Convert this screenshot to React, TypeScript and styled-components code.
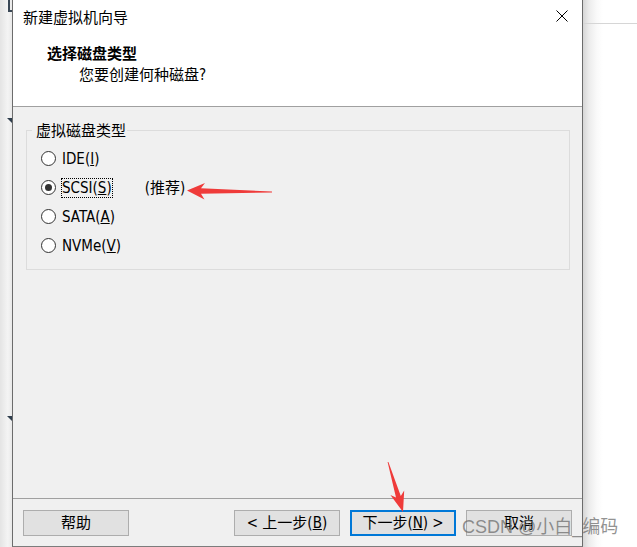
import React from "react";
import styled, { createGlobalStyle } from "styled-components";

const GlobalStyle = createGlobalStyle`
  html, body { margin: 0; padding: 0; background: #ffffff; }
  body { width: 637px; height: 547px; overflow: hidden; }
`;

const UI_FONT = `"DejaVu Sans Condensed", "DejaVu Sans", "Noto Sans CJK SC", sans-serif`;
const CJK_FONT = `"Noto Sans CJK SC", "DejaVu Sans", sans-serif`;

const Page = styled.div`
  position: relative;
  display: flex;
  width: 637px;
  height: 547px;
  overflow: hidden;
  font-family: ${UI_FONT};
  font-stretch: condensed;
  font-size: 15px;
  color: #000;
`;

const LeftStrip = styled.div`
  width: 12px;
  flex: none;
  display: flex;
  flex-direction: column;
  background: linear-gradient(to right, #e4e4e4, #f4f4f4 65%, #e9e9e9);
`;

const Bracket = styled.div`
  margin-left: 8px;
  width: 3px;
  height: 10px;
  border-left: 2px solid #3a4856;
  border-bottom: 2px solid #3a4856;
`;

const Caret = styled.div<{ $top: number }>`
  margin-top: ${(p) => p.$top}px;
  margin-left: 7px;
  width: 0;
  height: 0;
  border-top: 5px solid #2e3d4c;
  border-left: 5px solid transparent;
`;

const Window = styled.div`
  width: 571px;
  height: 547px;
  flex: none;
  box-sizing: border-box;
  border-left: 1px solid #6c6c6c;
  border-right: 1px solid #6c6c6c;
  border-bottom: 1px solid #7c7c7c;
  display: flex;
  flex-direction: column;
  background: #f0f0f0;
`;

const Header = styled.div`
  height: 106px;
  flex: none;
  background: #ffffff;
  border-bottom: 1px solid #a0a0a0;
`;

const TitleBar = styled.div`
  height: 32px;
  display: flex;
  align-items: center;
  justify-content: space-between;
  padding-left: 10px;
`;

const TitleText = styled.div`
  font-family: ${CJK_FONT};
  font-size: 15px;
  line-height: 20px;
  margin-top: 1px;
`;

const CloseButton = styled.div`
  width: 40px;
  height: 30px;
  display: flex;
  align-items: center;
  justify-content: center;
`;

const StepTitle = styled.div`
  margin: 11px 0 0 34px;
  font-family: ${CJK_FONT};
  font-weight: bold;
  font-size: 15px;
  line-height: 20px;
`;

const StepSubtitle = styled.div`
  margin: 2px 0 0 66px;
  font-size: 15px;
  line-height: 20px;
`;

const Body = styled.div`
  flex: 1;
  padding: 13px 12px 0 13px;
`;

const GroupBox = styled.fieldset`
  margin: 0;
  padding: 0;
  border: 1px solid #dcdcdc;
  min-width: 0;
`;

const GroupLabel = styled.legend`
  margin-left: 5px;
  padding: 0 1px 0 4px;
  font-family: ${CJK_FONT};
  font-size: 15px;
  line-height: 20px;
`;

const RadioList = styled.div`
  display: flex;
  flex-direction: column;
  padding: 4px 0 9px 14px;
`;

const RadioRow = styled.div`
  height: 29px;
  display: flex;
  align-items: center;
`;

const RadioCircle = styled.span<{ $checked?: boolean }>`
  position: relative;
  width: 15px;
  height: 15px;
  flex: none;
  box-sizing: border-box;
  border-radius: 50%;
  border: 1px solid #333333;
  background: #ffffff;
  &::after {
    content: "";
    display: ${(p) => (p.$checked ? "block" : "none")};
    position: absolute;
    left: 3px;
    top: 3px;
    width: 7px;
    height: 7px;
    border-radius: 50%;
    background: #333333;
  }
`;

const RadioText = styled.span<{ $focused?: boolean }>`
  margin-left: 5px;
  line-height: 18px;
  border: 1px dotted ${(p) => (p.$focused ? "#000" : "transparent")};
`;

const Note = styled.span`
  margin-left: 32px;
  line-height: 18px;
`;

const Footer = styled.div`
  height: 48px;
  flex: none;
  box-sizing: border-box;
  border-top: 1px solid #a0a0a0;
  padding: 11px 10px 0 10px;
  display: flex;
  justify-content: space-between;
  align-items: flex-start;
`;

const NavGroup = styled.div`
  display: flex;
  gap: 10px;
`;

const Button = styled.div<{ $primary?: boolean }>`
  width: 106px;
  height: 26px;
  box-sizing: border-box;
  display: flex;
  align-items: center;
  justify-content: center;
  background: #e1e1e1;
  border: ${(p) => (p.$primary ? "2px solid #0078d7" : "1px solid #adadad")};
  font-size: 15px;
  line-height: 20px;
  white-space: pre;
`;

const RightStrip = styled.div`
  flex: 1;
  display: flex;
  flex-direction: column;
  background: linear-gradient(to right, #d6d6d6, #ececec 6px, #fafafa 14px, #ffffff 20px);
`;

const StripLine = styled.div`
  margin-top: 23px;
  height: 1px;
  background: #d6d6d6;
`;

const Overlay = styled.svg`
  position: absolute;
  left: 0;
  top: 0;
  pointer-events: none;
`;

const Watermark = styled.div`
  position: absolute;
  left: 462px;
  top: 516px;
  font-family: "Liberation Sans", "Noto Sans CJK SC", sans-serif;
  font-stretch: normal;
  font-size: 18px;
  line-height: 22px;
  color: rgba(105, 105, 105, 0.72);
  white-space: pre;
`;

const options = [
  { pre: "IDE(", key: "I", post: ")" },
  { pre: "SCSI(", key: "S", post: ")", checked: true },
  { pre: "SATA(", key: "A", post: ")" },
  { pre: "NVMe(", key: "V", post: ")" },
];

export default function App() {
  return (
    <>
      <GlobalStyle />
      <Page>
        <LeftStrip>
          <Bracket />
          <Caret $top={106} />
          <Caret $top={293} />
        </LeftStrip>
        <Window>
          <Header>
            <TitleBar>
              <TitleText>新建虚拟机向导</TitleText>
              <CloseButton>
                <svg width="12" height="12" viewBox="0 0 12 12">
                  <path d="M0.5 0.5 L11.5 11.5 M11.5 0.5 L0.5 11.5" stroke="#000" strokeWidth="1" fill="none" />
                </svg>
              </CloseButton>
            </TitleBar>
            <StepTitle>选择磁盘类型</StepTitle>
            <StepSubtitle>您要创建何种磁盘?</StepSubtitle>
          </Header>
          <Body>
            <GroupBox>
              <GroupLabel>虚拟磁盘类型</GroupLabel>
              <RadioList>
                {options.map((o) => (
                  <RadioRow key={o.pre}>
                    <RadioCircle $checked={o.checked} />
                    <RadioText $focused={o.checked}>
                      {o.pre}
                      <u>{o.key}</u>
                      {o.post}
                    </RadioText>
                    {o.checked && <Note>(推荐)</Note>}
                  </RadioRow>
                ))}
              </RadioList>
            </GroupBox>
          </Body>
          <Footer>
            <Button>帮助</Button>
            <NavGroup>
              <Button>
                {"< 上一步("}
                <u>B</u>
                {")"}
              </Button>
              <Button $primary>
                {"下一步("}
                <u>N</u>
                {") >"}
              </Button>
              <Button>取消</Button>
            </NavGroup>
          </Footer>
        </Window>
        <RightStrip>
          <StripLine />
        </RightStrip>
        <Overlay width="637" height="547" viewBox="0 0 637 547">
          <polygon
            points="187,190.5 205,183 201,188.3 272,191.6 272,192.4 201,193.8 204.5,199.5"
            fill="#ef3b3a"
          />
          <polygon
            points="403,512 404.2,490.6 400.8,496 388.4,461.9 387.6,462.1 396,497.4 390.4,494.9"
            fill="#ef3b3a"
          />
        </Overlay>
        <Watermark>CSDN @小白_编码</Watermark>
      </Page>
    </>
  );
}
